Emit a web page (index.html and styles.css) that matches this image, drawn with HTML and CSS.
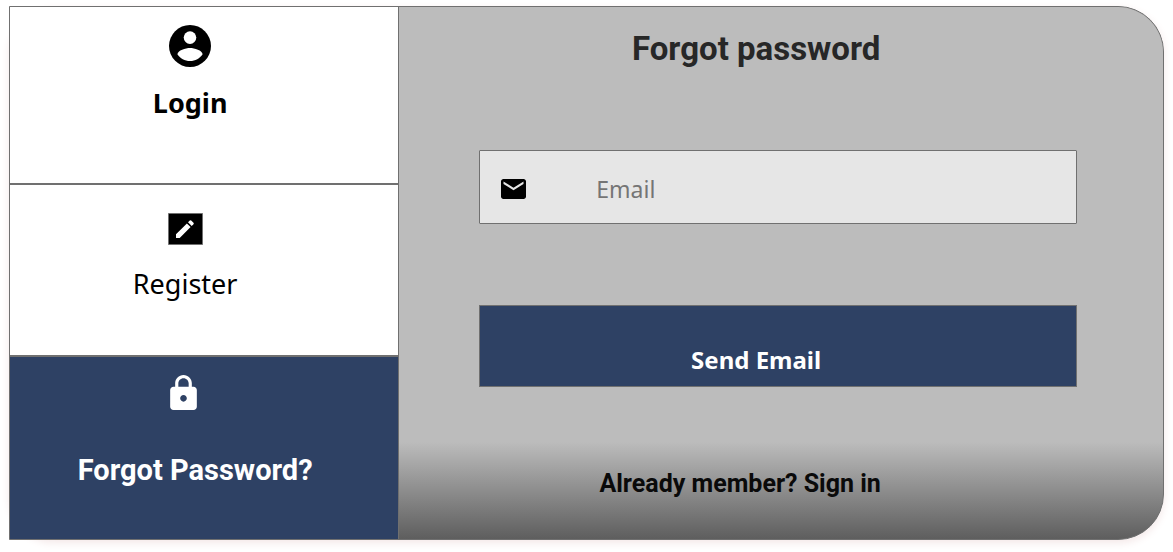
FILE: index.html
```html
<!DOCTYPE html>
<html lang="en">
<head>
<meta charset="utf-8">
<meta name="viewport" content="width=device-width, initial-scale=1">
<title>Forgot password</title>
<link rel="stylesheet" href="styles.css">
</head>
<body>
<main class="shell">
  <div class="card">
    <nav class="tabs" aria-label="Account">
      <a class="tab tab-login" href="#login">
        <svg class="icon-user" viewBox="2 2 20 20" aria-hidden="true"><circle cx="12" cy="12" r="10"/><circle class="cutout" cx="12" cy="8" r="3"/><path class="cutout" d="M12 19.200C9.500 19.200 7.290 17.920 6 15.980C6.030 13.990 10 12.900 12 12.900C14 12.900 17.970 13.990 18 15.980C16.710 17.920 14.500 19.200 12 19.200z"/></svg>
        <span>Login</span>
      </a>
      <a class="tab tab-register" href="#register">
        <svg class="icon-edit" viewBox="0 0 35 32" aria-hidden="true"><path class="edit-box" d="M.5.5h34v31H.5z"/><path class="cutout" d="M8 21.300V25h3.700L22.600 14.100l-3.700-3.700L8 21.300zM25.500 11.200a1 1 0 0 0 0-1.400l-2.300-2.300a1 1 0 0 0-1.400 0L20 9.300l3.700 3.700 1.800-1.800z"/></svg>
        <span>Register</span>
      </a>
      <a class="tab tab-forgot" href="#forgot" aria-current="page">
        <svg class="icon-lock" viewBox="4 1 16 21" aria-hidden="true"><path d="M18 8h-1V6c0-2.760-2.240-5-5-5S7 3.240 7 6v2H6c-1.100 0-2 .9-2 2v10c0 1.100.9 2 2 2h12c1.100 0 2-.9 2-2V10c0-1.100-.9-2-2-2zm-6 9c-1.100 0-2-.9-2-2s.9-2 2-2 2 .9 2 2-.9 2-2 2zm3.100-9H8.900V6c0-1.710 1.390-3.100 3.100-3.100s3.100 1.390 3.100 3.100v2z"/></svg>
        <span>Forgot Password?</span>
      </a>
    </nav>
    <form class="panel">
      <h1 class="title">Forgot password</h1>
      <label class="field">
        <svg class="icon-mail" viewBox="2 4 20 16" aria-hidden="true"><path d="M20 4H4c-1.100 0-1.990.9-1.990 2L2 18c0 1.100.9 2 2 2h16c1.100 0 2-.9 2-2V6c0-1.100-.9-2-2-2zm0 4l-8 5-8-5V6l8 5 8-5v2z"/></svg>
        <input class="email" type="email" placeholder="Email" aria-label="Email">
      </label>
      <button class="send" type="button">Send Email</button>
      <a class="signin" href="#login">Already member? Sign in</a>
    </form>
  </div>
</main>
</body>
</html>
```
FILE: styles.css
```css
* {
  box-sizing: border-box;
}

body {
  margin: 0;
  background: #fff;
}

.shell {
  margin: 6px 9px 12px;
  border-radius: 46px;
  box-shadow: 0 3px 8px #f4e8e8;
}

.card {
  display: grid;
  grid-template-columns: 390fr 765fr;
  border: 1px solid #707070;
  border-radius: 0 46px 46px 0;
  background: #707070;
  overflow: hidden;
}

.tabs {
  display: flex;
  flex-direction: column;
  gap: 2px;
  border-right: 1px solid #707070;
}

.tab {
  display: flex;
  flex-direction: column;
  align-items: center;
  background: #fff;
  color: #000;
  font: 27px/40px "Noto Sans", sans-serif;
  text-decoration: none;
}

.tab-login {
  gap: 16px;
  padding: 18px 28px 60px 0;
  font-weight: 700;
}

.tab-register {
  gap: 19px;
  padding: 28px 38px 51px 0;
}

.tab-forgot {
  flex: 1;
  gap: 40px;
  padding: 18px 18px 49px 0;
  background: #2e4164;
  color: #fff;
  font: 700 29px/40px Roboto, sans-serif;
}

.icon-user {
  width: 42px;
  height: 42px;
}

.cutout {
  fill: #fff;
}

.icon-edit {
  width: 35px;
  height: 32px;
}

.edit-box {
  stroke: #707070;
}

.icon-lock {
  width: 27px;
  height: 35px;
  margin-right: 24px;
  fill: #fff;
}

.panel {
  display: flex;
  flex-direction: column;
  padding: 22px 86px 35px 80px;
  background: linear-gradient(to top, #5e5e5e, #bcbcbc 97px);
}

.title {
  margin: 0 0 81px;
  padding-right: 44px;
  color: #272727;
  font: 700 33px/40px Roboto, sans-serif;
  text-align: center;
}

.field {
  display: flex;
  align-items: center;
  gap: 70px;
  height: 74px;
  padding: 4px 21px 0;
  border: 1px solid #707070;
  border-radius: 1px;
  background: #e6e6e6;
}

.icon-mail {
  flex: none;
  width: 25px;
  height: 20px;
}

.email {
  flex: 1;
  min-width: 0;
  padding: 0;
  border: 0;
  outline: 0;
  background: transparent;
  color: #000;
  font: 23px/34px "Noto Sans", sans-serif;
}

.email::placeholder {
  color: #757575;
}

.send {
  margin: 81px 0 76px;
  padding: 34px 44px 6px 0;
  border: 1px solid #707070;
  background: #2e4164;
  color: #fff;
  font: 700 24px/40px "Noto Sans", sans-serif;
}

.signin {
  padding: 1px 76px 0 0;
  color: #0a0a0a;
  font: 700 25px/40px Roboto, sans-serif;
  text-align: center;
  text-decoration: none;
}
```
